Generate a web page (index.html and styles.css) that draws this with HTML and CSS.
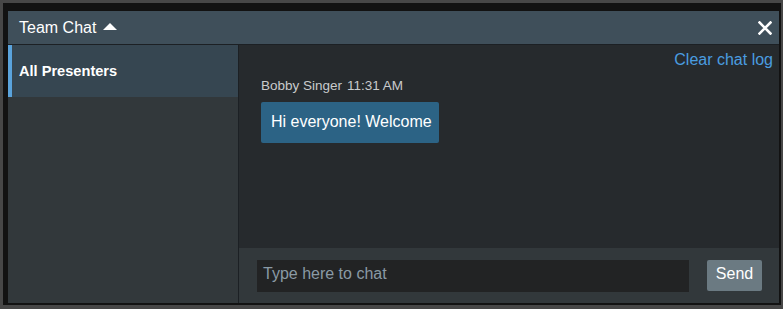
FILE: index.html
```html
<!DOCTYPE html>
<html>
<head>
<meta charset="utf-8">
<link rel="stylesheet" href="styles.css">
</head>
<body>
<div class="frame">
  <div class="window">
    <div class="header">
      <div class="title">Team Chat <span class="caret"></span></div>
      <div class="close">
        <svg width="14" height="14" viewBox="0 0 14 14"><path d="M1.5 1.5 L12.5 12.5 M12.5 1.5 L1.5 12.5" stroke="#fff" stroke-width="2.6" stroke-linecap="square"/></svg>
      </div>
    </div>
    <div class="body">
      <div class="sidebar">
        <div class="item active">All Presenters</div>
      </div>
      <div class="main">
        <div class="log">
          <div class="toolbar"><a class="clear">Clear chat log</a></div>
          <div class="meta"><span class="name">Bobby Singer</span><span class="time">11:31 AM</span></div>
          <div class="bubble">Hi everyone! Welcome</div>
        </div>
        <div class="compose">
          <div class="input">Type here to chat</div>
          <div class="send">Send</div>
        </div>
      </div>
    </div>
  </div>
</div>
</body>
</html>
```
FILE: styles.css
```css
html, body {
  margin: 0;
  padding: 0;
  background: #474747;
  width: 783px;
  height: 309px;
  overflow: hidden;
  font-family: "Liberation Sans", Arial, sans-serif;
}
.frame {
  margin: 3px 3px 0 3px;
  width: 772px;
  height: 292px;
  background: #121212;
  padding: 8px 1px 2px 5px;
}
.window {
  width: 771px;
  height: 292px;
  display: flex;
  flex-direction: column;
}
.header {
  height: 33px;
  background: #3f4f5a;
  border-bottom: 1px solid #1c2024;
  display: flex;
  align-items: center;
  justify-content: space-between;
  padding: 0 7px 0 11px;
  flex: none;
}
.title {
  color: #fff;
  font-size: 16px;
  display: flex;
  align-items: center;
}
.caret {
  display: inline-block;
  width: 0;
  height: 0;
  margin-left: 7px;
  margin-top: -2px;
  border-left: 7px solid transparent;
  border-right: 7px solid transparent;
  border-bottom: 7px solid #fff;
}
.close {
  width: 14px;
  height: 14px;
  display: flex;
}
.body {
  flex: 1;
  display: flex;
  min-height: 0;
}
.sidebar {
  width: 230px;
  background: #32383b;
  border-right: 1px solid #1c2024;
  flex: none;
}
.item {
  height: 52px;
  display: flex;
  align-items: center;
  padding-left: 7px;
  border-left: 4px solid #5aa3dc;
  background: #364651;
  color: #fff;
  font-weight: bold;
  font-size: 14.6px;
}
.main {
  flex: 1;
  display: flex;
  flex-direction: column;
  background: #262a2d;
}
.log {
  flex: 1;
  padding: 6px 6px 0 22px;
}
.toolbar {
  display: flex;
  justify-content: flex-end;
  height: 20px;
}
.clear {
  color: #4a9de0;
  font-size: 16px;
}
.meta {
  margin-top: 7px;
  color: #c9cbcc;
  font-size: 13.5px;
  display: flex;
  gap: 5px;
}
.bubble {
  display: inline-block;
  margin-top: 9px;
  background: #2c6385;
  color: #fff;
  font-size: 16px;
  padding: 11px 7px 12px 10px;
  border-radius: 2px;
}
.compose {
  height: 55px;
  background: #32383b;
  display: flex;
  align-items: center;
  padding: 0 17px 0 18px;
  gap: 18px;
  flex: none;
}
.input {
  flex: 1;
  height: 32px;
  box-sizing: border-box;
  background: #222324;
  color: #8a9aa5;
  font-size: 16px;
  display: flex;
  align-items: center;
  padding: 0 0 4px 6px;
  margin-top: 1px;
}
.send {
  width: 55px;
  height: 31px;
  box-sizing: border-box;
  padding-bottom: 3px;
  background: #6b7a82;
  color: #fff;
  font-size: 16px;
  display: flex;
  align-items: center;
  justify-content: center;
  border-radius: 2px;
}
```
